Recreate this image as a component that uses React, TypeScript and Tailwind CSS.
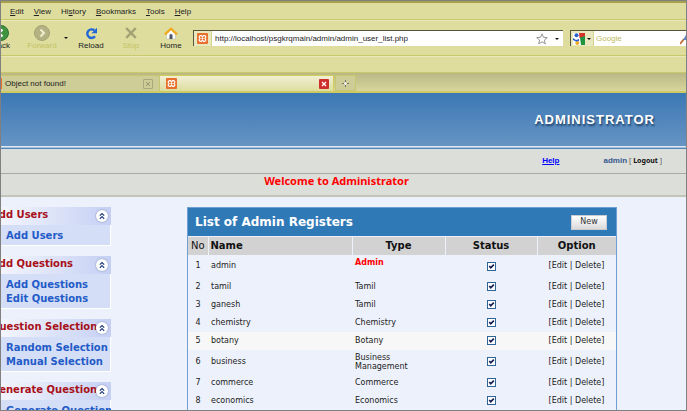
import React from "react";

const ADMINS = [
  { no: 1, name: "admin", type: "Admin", height: "h-[23px]", root: true },
  { no: 2, name: "tamil", type: "Tamil", height: "h-[18px]" },
  { no: 3, name: "ganesh", type: "Tamil", height: "h-[18px]" },
  { no: 4, name: "chemistry", type: "Chemistry", height: "h-[18px]" },
  { no: 5, name: "botany", type: "Botany", height: "h-[18px]", active: true },
  { no: 6, name: "business", type: "Business Management", height: "h-6" },
  { no: 7, name: "commerce", type: "Commerce", height: "h-[18px]" },
  { no: 8, name: "economics", type: "Economics", height: "h-[18px]" },
];

const MENU = [
  { title: "Add Users", items: ["Add Users"] },
  { title: "Add Questions", items: ["Add Questions", "Edit Questions"] },
  { title: "Question Selection", items: ["Random Selection", "Manual Selection"] },
  { title: "Generate Question", items: ["Generate Question", "View Question"] },
];

const MENUBAR = [
  ["", "E", "dit"],
  ["", "V", "iew"],
  ["Hi", "s", "tory"],
  ["", "B", "ookmarks"],
  ["", "T", "ools"],
  ["", "H", "elp"],
];

function XamppIcon() {
  return (
    <svg viewBox="0 0 11 11" className="size-[11px] shrink-0" aria-hidden="true">
      <rect width="11" height="11" rx="1" fill="#e8702c" />
      <path
        d="M3.2 2.6h1.3l1 1.5 1-1.5h1.3l.9.9v1.2l-.8.8.8.8v1.2l-.9.9H6.500l-1-1.500-1 1.500H3.200l-.9-.9V6.300l.8-.8-.8-.8V3.500z"
        fill="none"
        stroke="#fff"
        strokeWidth="1.1"
      />
      <path d="M4.500 5.500h2" stroke="#fff" strokeWidth="1" />
    </svg>
  );
}

function Caret() {
  return (
    <svg viewBox="0 0 4 2" className="h-[2px] w-1 shrink-0" aria-hidden="true">
      <path d="M0 0h4L2 2z" fill="#111" />
    </svg>
  );
}

function ToolButton({ label, width, muted, children }: { label: string; width: string; muted?: boolean; children: React.ReactNode }) {
  return (
    <button className={`flex shrink-0 flex-col items-center text-[8px] leading-[10px] ${width} ${muted ? "text-[#c4c364]" : "text-[#222]"}`}>
      <span className="flex h-4 items-center">{children}</span>
      {label}
    </button>
  );
}

function BrowserChrome() {
  return (
    <div className="bg-[#dedd9e] font-['Liberation_Sans',sans-serif] text-[8px] text-[#222]">
      <nav className="flex h-[19px] items-center gap-[10px] border-t-2 border-b border-t-[#a89f4c] border-b-[#cac86c] pt-[2px] pl-[9px]">
        {MENUBAR.map(([a, u, b]) => (
          <button key={u + b}>
            {a}
            <span className="underline">{u}</span>
            {b}
          </button>
        ))}
      </nav>

      <div className="flex h-9 items-center border-t border-b border-t-[#e9e8ba] border-b-[#cac86c]">
        <div className="-ml-[14px] flex">
          <ToolButton label="Back" width="w-7">
            <svg viewBox="0 0 16 16" className="size-4">
              <circle cx="8" cy="8" r="7.500" fill="#3f9440" stroke="#34713a" />
              <path d="M9.500 4.500 6 8l3.500 3.500" fill="none" stroke="#fff" strokeWidth="2.200" />
            </svg>
          </ToolButton>
        </div>
        <div className="ml-[9px] flex">
          <ToolButton label="Forward" width="w-9" muted>
            <svg viewBox="0 0 16 16" className="size-4">
              <circle cx="8" cy="8" r="7.500" fill="#b4b283" stroke="#a4a274" />
              <path d="M6.500 4.500 10 8l-3.500 3.500" fill="none" stroke="#eeedce" strokeWidth="2" />
            </svg>
          </ToolButton>
        </div>
        <span className="mr-[5px] ml-1 flex w-1">
          <Caret />
        </span>
        <div className="flex gap-1">
          <ToolButton label="Reload" width="w-9">
            <svg viewBox="0 0 13 13" className="size-[13px]">
              <path d="M9.300 3.300A4.300 4.300 0 1 0 10 9.300" fill="none" stroke="#1f66d8" strokeWidth="2.400" />
              <path d="M12 .8v5.400H6.500z" fill="#1f66d8" />
            </svg>
          </ToolButton>
          <ToolButton label="Stop" width="w-9" muted>
            <svg viewBox="0 0 12 12" className="size-3">
              <path d="M1.200 1.200l9.600 9.600M10.800 1.200l-9.600 9.600" stroke="#a3a176" strokeWidth="2.400" />
            </svg>
          </ToolButton>
          <ToolButton label="Home" width="w-9">
            <svg viewBox="0 0 14 13" className="h-[13px] w-[14px]">
              <path d="M2.500 6.500 7 2.500l4.500 4v5.500h-9z" fill="#fff" stroke="#b9b9b9" strokeWidth=".6" />
              <path d="M1 7.400 7 1.700l6 5.700" fill="none" stroke="#f2a81d" strokeWidth="2.200" />
              <path d="M5.500 12V8.500a1.500 1.500 0 0 1 3 0V12z" fill="#4a5668" />
            </svg>
          </ToolButton>
        </div>

        <div className="ml-1 flex h-4 min-w-0 flex-1 items-center border-t border-l border-[#55553c] bg-white pr-1">
          <span className="mr-[3px] flex h-full items-center border-r border-[#d5d48e] bg-[#e8e7bd] px-[3px]">
            <XamppIcon />
          </span>
          <input
            aria-label="Address"
            defaultValue="http://localhost/psgkrqmain/admin/admin_user_list.php"
            className="min-w-0 flex-1 bg-transparent outline-none"
          />
          <svg viewBox="0 0 12 12" className="mr-[7px] size-3" aria-hidden="true">
            <path d="M6 .8l1.500 3.500 3.800.3-2.900 2.500.9 3.700L6 8.800l-3.300 2 .9-3.700L.7 4.600l3.800-.3z" fill="#fff" stroke="#888" strokeWidth=".9" />
          </svg>
          <Caret />
        </div>

        <div className="ml-[7px] flex h-4 w-[116px] shrink-0 items-center overflow-hidden border-t border-l border-[#55553c] bg-white">
          <span className="flex h-full items-center gap-[2px] border-r border-[#d5d48e] bg-[#e8e7bd] px-[2px]">
            <svg viewBox="0 0 12 12" className="size-3" aria-hidden="true">
              <rect width="12" height="12" fill="#fff" />
              <path d="M6 0h6v5H6.500z" fill="#d8322c" />
              <path d="M7 4.500 12 3v9H8z" fill="#1e9440" />
              <circle cx="3.500" cy="2.200" r="2" fill="#2b60cf" />
              <circle cx="4.300" cy="10" r="2" fill="#f2ad24" />
              <path d="M0 5l3 2 3-1v2L3 8.500 0 7z" fill="#2b60cf" />
            </svg>
            <Caret />
          </span>
          <input aria-label="Search" placeholder="Google" className="min-w-0 flex-1 bg-transparent pl-[2px] outline-none placeholder:text-[#bcba5c]" />
          <svg viewBox="0 0 6 12" className="h-3 w-[6px] shrink-0" aria-hidden="true">
            <path d="M0 11l4-5" stroke="#c07038" strokeWidth="2" />
            <path d="M3 7l3-5v5z" fill="#5c84c4" />
          </svg>
        </div>
      </div>

      <div className="h-[17px] border-t border-b border-t-[#e9e8ba] border-b-[#cac86c]" />

      <div className="flex h-5 border-b-2 border-[#cfcb62] bg-linear-to-b from-[#b9b784] to-[#d8d69c] pt-[2px]">
        <div className="flex w-[159px] items-center justify-between border-t border-r border-[#c8c66e] bg-[#cecc97] pr-[6px]">
          <span className="flex items-center gap-[3px]">
            <span className="h-[11px] w-px bg-[#e8702c]" />
            <button>Object not found!</button>
          </span>
          <button aria-label="Close tab" className="size-[10px] rounded-[1px] border border-[#aaa87c]">
            <svg viewBox="0 0 8 8" className="size-2">
              <path d="M2 2l4 4M6 2l-4 4" stroke="#99976f" />
            </svg>
          </button>
        </div>
        <div className="flex w-[174px] items-center justify-between border-t border-r border-[#d1cf55] bg-linear-to-b from-[#f0efd4] to-[#dedd9e] pr-1 pl-[6px]">
          <XamppIcon />
          <button aria-label="Close tab" className="flex size-[10px] items-center justify-center rounded-[1px] bg-[#cc2f2d]">
            <svg viewBox="0 0 8 8" className="size-2">
              <path d="M2 2l4 4M6 2l-4 4" stroke="#fff" strokeWidth="1.300" />
            </svg>
          </button>
        </div>
        <button aria-label="New tab" className="ml-px flex w-[21px] items-center justify-center border border-[#c8c66e] bg-[#cecc97]">
          <svg viewBox="0 0 7 7" className="size-[7px]">
            <path d="M3.500 0v7M0 3.500h7" stroke="#77756a" />
            <path d="M3.500 2v3M2 3.500h3" stroke="#eee" />
          </svg>
        </button>
      </div>
    </div>
  );
}

function Sidebar() {
  return (
    <aside className="flex w-[110px] shrink-0 flex-col gap-[10px] overflow-hidden font-bold">
      {MENU.map((group) => (
        <section key={group.title} className="shrink-0">
          <div className="flex h-[18px] items-center bg-linear-to-r from-[#f3f5fd] to-[#c5d0f3] pr-[3px]">
            <h2 className="-mt-1 -ml-[10px] min-w-0 flex-1 text-[10px] whitespace-nowrap text-[#a81018]">{group.title}</h2>
            <button aria-label="Collapse" className="size-3 shrink-0 rounded-full bg-white shadow-[0_0_2px_#7886b0]">
              <svg viewBox="0 0 12 12" className="size-3">
                <path d="M3.800 5.700 6 3.500l2.200 2.200M3.800 8.900 6 6.700l2.200 2.200" fill="none" stroke="#1c3a78" strokeWidth="1.200" />
              </svg>
            </button>
          </div>
          <ul className="border-r border-b border-white bg-[#d5def7] py-[3px] pl-[5px]">
            {group.items.map((item) => (
              <li key={item} className="flex h-[14px] items-center text-[10px] whitespace-nowrap text-[#225bc7]">
                <a href="#">{item}</a>
              </li>
            ))}
          </ul>
        </section>
      ))}
    </aside>
  );
}

function StatusBox({ name }: { name: string }) {
  return (
    <span className="mx-auto grid size-[9px]">
      <input
        type="checkbox"
        defaultChecked
        aria-label={`${name} active`}
        className="peer col-start-1 row-start-1 size-[9px] appearance-none border border-[#2f6596] bg-white"
      />
      <svg viewBox="0 0 9 9" className="pointer-events-none invisible col-start-1 row-start-1 size-[9px] peer-checked:visible">
        <path d="M2.300 4l1.500 1.800L6.800 2.700" fill="none" stroke="#141c50" strokeWidth="1.700" />
      </svg>
    </span>
  );
}

function RegisterTable() {
  return (
    <section className="mr-[69px] min-w-0 flex-1 self-start border border-[#6f9fd0]">
      <div className="flex h-7 items-center justify-between bg-[#3079b7] pr-[9px] pl-[7px]">
        <h1 className="text-[12px] font-bold text-white">List of Admin Registers</h1>
        <button className="flex h-[15px] w-9 items-center justify-center border border-[#c9cdd2] bg-linear-to-b from-white to-[#dadada] text-[8px] text-[#333]">
          New
        </button>
      </div>
      <table className="w-full table-fixed border-t border-[#edf1fb] text-[8px] text-[#222]">
        <colgroup>
          <col className="w-5" />
          <col />
          <col className="w-[93px]" />
          <col className="w-[92px]" />
          <col className="w-[79px]" />
        </colgroup>
        <thead>
          <tr className="h-[18px] bg-[#d2d2d2] text-[10px] text-[#111]">
            <th className="font-normal">No</th>
            <th className="border-l border-[#edf1fb] pl-[2px] text-left">Name</th>
            <th className="border-l border-[#edf1fb]">Type</th>
            <th className="border-l border-[#edf1fb]">Status</th>
            <th className="border-l border-[#edf1fb]">Option</th>
          </tr>
        </thead>
        <tbody>
          {ADMINS.map((a) => (
            <tr key={a.no} className={`${a.height} ${a.active ? "bg-[#f7f7f7]" : ""}`}>
              <td className="text-center">{a.no}</td>
              <td className="pl-[3px]">{a.name}</td>
              <td className={a.root ? "pb-[6px] pl-[3px] font-bold text-[#f00]" : "pr-6 pl-[3px] leading-[9px]"}>{a.type}</td>
              <td>
                <StatusBox name={a.name} />
              </td>
              <td className="text-center whitespace-nowrap">
                [<a href="#">Edit</a> | <a href="#">Delete</a>]
              </td>
            </tr>
          ))}
        </tbody>
      </table>
    </section>
  );
}

export default function App() {
  return (
    <div className="h-screen overflow-hidden border border-[#808080] bg-[#edf1fb] font-['DejaVu_Sans',sans-serif]">
      <BrowserChrome />
      <header>
        <div className="flex h-[53px] items-center justify-end bg-linear-to-b from-[#3b78b4] to-[#6694c4] pr-[31px] font-['Liberation_Sans',sans-serif] text-[13px] font-bold tracking-[1px] text-white [text-shadow:1px_2px_2px_#1d3f68]">
          ADMINISTRATOR
        </div>
        <div className="h-[3px] border-t border-b border-t-[#dfe7ee] border-b-[#4d86bd] bg-[#a9c3dc]" />
        <div className="flex h-[25px] items-center justify-end border-b border-[#a9aaa5] bg-[#dcded9] pr-6 text-[8px]">
          <a href="#" className="mr-11 font-['Liberation_Sans',sans-serif] font-bold text-[#00f] underline">
            Help
          </a>
          <span className="font-['Liberation_Sans',sans-serif] font-bold text-[#35588f]">admin</span>
          <span className="ml-[2px] font-['Noto_Sans',sans-serif] text-[7px] text-[#555]">
            [{" "}
            <a href="#" className="font-bold text-[#111]">
              Logout
            </a>{" "}
            ]
          </span>
        </div>
        <div className="flex h-[23px] items-start justify-center border-b-2 border-[#c3c5b9] bg-[#dcded9] pr-[14px] font-['Noto_Sans',sans-serif] text-[11px] leading-[14px] font-bold text-[#f00]">
          Welcome to Administrator
        </div>
      </header>
      <main className="flex gap-[76px] pt-[10px]">
        <Sidebar />
        <RegisterTable />
      </main>
    </div>
  );
}
